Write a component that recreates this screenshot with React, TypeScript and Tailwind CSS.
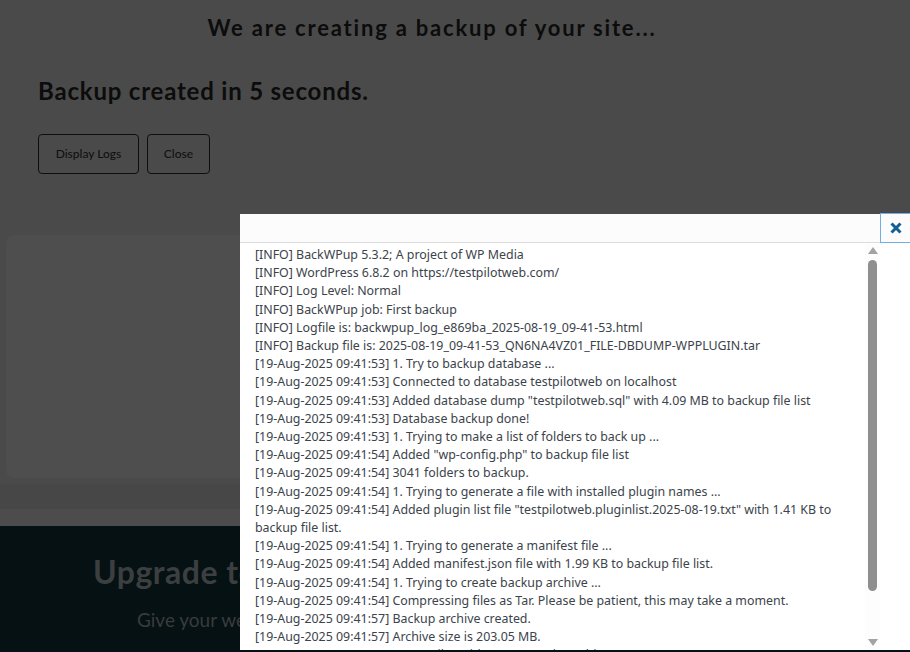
import React from 'react';

const logLines: string[] = [
  '[INFO] BackWPup 5.3.2; A project of WP Media',
  '[INFO] WordPress 6.8.2 on https://testpilotweb.com/',
  '[INFO] Log Level: Normal',
  '[INFO] BackWPup job: First backup',
  '[INFO] Logfile is: backwpup_log_e869ba_2025-08-19_09-41-53.html',
  '[INFO] Backup file is: 2025-08-19_09-41-53_QN6NA4VZ01_FILE-DBDUMP-WPPLUGIN.tar',
  '[19-Aug-2025 09:41:53] 1. Try to backup database ...',
  '[19-Aug-2025 09:41:53] Connected to database testpilotweb on localhost',
  '[19-Aug-2025 09:41:53] Added database dump "testpilotweb.sql" with 4.09 MB to backup file list',
  '[19-Aug-2025 09:41:53] Database backup done!',
  '[19-Aug-2025 09:41:53] 1. Trying to make a list of folders to back up ...',
  '[19-Aug-2025 09:41:54] Added "wp-config.php" to backup file list',
  '[19-Aug-2025 09:41:54] 3041 folders to backup.',
  '[19-Aug-2025 09:41:54] 1. Trying to generate a file with installed plugin names ...',
  '[19-Aug-2025 09:41:54] Added plugin list file "testpilotweb.pluginlist.2025-08-19.txt" with 1.41 KB to',
  'backup file list.',
  '[19-Aug-2025 09:41:54] 1. Trying to generate a manifest file ...',
  '[19-Aug-2025 09:41:54] Added manifest.json file with 1.99 KB to backup file list.',
  '[19-Aug-2025 09:41:54] 1. Trying to create backup archive ...',
  '[19-Aug-2025 09:41:54] Compressing files as Tar. Please be patient, this may take a moment.',
  '[19-Aug-2025 09:41:57] Backup archive created.',
  '[19-Aug-2025 09:41:57] Archive size is 203.05 MB.',
  '[19-Aug-2025 09:41:57] 42367 Files with 203.05 MB in Archive.',
];

const headingFont = { fontFamily: '"Lato", "Noto Sans", sans-serif' };

function App() {
  return (
    <div className="relative h-[652px] w-[910px] overflow-hidden bg-[#4a4a4a]">
      {/* Page under the overlay */}
      <div className="flex flex-col" style={headingFont}>
        <h1 className="pt-[14px] pr-[46px] text-center text-[22px] font-bold leading-[28px] tracking-[1.8px] text-[#0c0c0c]">
          We are creating a backup of your site...
        </h1>
        <h2 className="mt-[34px] pl-[38px] text-[24px] font-bold leading-[30px] tracking-[0.8px] text-[#0c0c0c]">
          Backup created in 5 seconds.
        </h2>
        <div className="mt-[28px] flex gap-[8px] pl-[38px]">
          <button className="h-[40px] w-[101px] rounded-[4px] border border-[#0e0e0e] text-[12px] font-medium text-[#111]">
            Display Logs
          </button>
          <button className="h-[40px] w-[63px] rounded-[4px] border border-[#0e0e0e] text-[12px] font-medium text-[#111]">
            Close
          </button>
        </div>
        <div className="mt-[61px] ml-[6px] h-[243px] w-[880px] rounded-[8px] bg-[#4e4e4e]" />
        <div className="mt-[6px] h-[25px] bg-[#474747]" />
        <div className="h-[17px] bg-[#4c4c4c]" />
        <div className="h-[200px] bg-[#061113] pt-[28px]">
          <div className="pl-[93px] text-[32px] font-bold leading-[36px] tracking-[0.5px] text-[#3c3f40]">
            Upgrade to BackWPup Pro
          </div>
          <div className="mt-[18px] pl-[137px] text-[19px] leading-[24px] text-[#383c3d]">
            Give your website the protection it deserves
          </div>
        </div>
      </div>

      {/* Log modal */}
      <div className="absolute left-[240px] top-[214px] bottom-[2px] right-[-40px] flex flex-col bg-white">
        <div className="flex h-[29px] shrink-0">
          <div className="h-[29px] w-[640px] border-b border-[#dcdcde] bg-[#fcfcfc]" />
          <button className="-mt-[1px] flex h-[30px] w-[31px] items-center justify-center border border-[#72aee6] bg-[#fcfcfc]">
            <svg width="14" height="14" viewBox="0 0 14 14">
              <path d="M2.5 2.5 L11.5 11.5 M11.5 2.5 L2.5 11.5" stroke="#135e96" strokeWidth="3" strokeLinecap="butt" />
            </svg>
          </button>
        </div>
        <div className="flex min-h-0 flex-1">
          <div
            className="w-[625px] overflow-hidden pl-[15px] pt-[3px] text-[12.4px] leading-[18.2px] text-[#3c434a]"
            style={{ fontFamily: '"Noto Sans", "Open Sans", sans-serif' }}
          >
            {logLines.map((line, i) => (
              <div key={i} className="whitespace-nowrap">
                {line}
              </div>
            ))}
          </div>
          {/* Scrollbar */}
          <div className="flex w-[15px] flex-col items-center bg-[#fdfdfd] pt-[4px] pb-[4px]">
            <svg width="10" height="7" viewBox="0 0 10 7">
              <path d="M5 0 L10 7 L0 7 Z" fill="#a3a3a3" />
            </svg>
            <div className="mt-[6px] h-[331px] w-[9px] rounded-full bg-[#8f8f8f]" />
            <div className="flex-1" />
            <svg width="10" height="7" viewBox="0 0 10 7">
              <path d="M0 0 L10 0 L5 7 Z" fill="#a3a3a3" />
            </svg>
          </div>
          <div className="flex-1 bg-white" />
        </div>
      </div>
    </div>
  );
}

export default App;
